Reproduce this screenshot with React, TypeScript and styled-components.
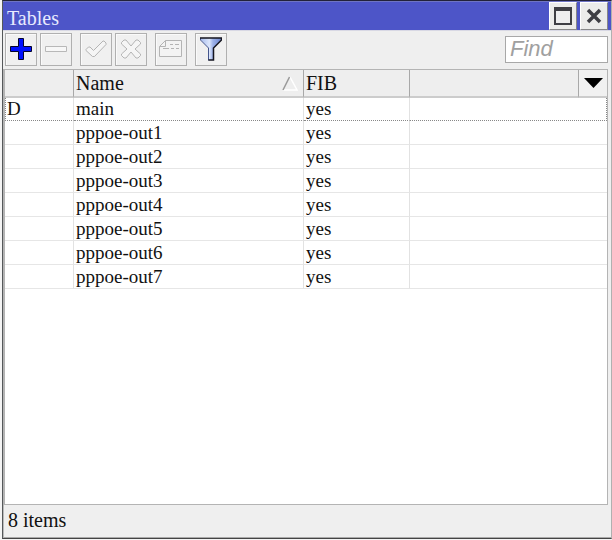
import React, { useState } from "react";
import styled, { createGlobalStyle } from "styled-components";

const GlobalStyle = createGlobalStyle`
  * { box-sizing: border-box; }
  body {
    margin: 0;
    background: #f4f4f4;
    font-family: "Liberation Serif", "Times New Roman", serif;
    font-size: 20px;
    color: #111;
  }
`;

const Window = styled.main`
  display: flex;
  flex-direction: column;
  min-height: calc(100vh - 1px);
  margin: 0 0 1px 2px;
  background: #efefef;
  border-top: 1px solid #22223a;
  border-left: 1px solid #55585a;
  border-right: 1px solid #b0b0b0;
  border-bottom: 1px solid #444;
`;

const TitleBar = styled.header`
  display: flex;
  align-items: stretch;
  justify-content: space-between;
  height: 29px;
  padding: 0 3px 0 4px;
  background: #4d55c8;
  border-top: 1px solid #6e74c4;
`;

const Title = styled.h1`
  margin: 0;
  font-size: 20px;
  line-height: 32px;
  font-weight: normal;
  color: #e8eaff;
`;

const WindowButtons = styled.div`
  display: flex;
  gap: 3px;
`;

const WindowButton = styled.button`
  display: flex;
  align-items: center;
  justify-content: center;
  width: 28px;
  padding: 0;
  background: #ececea;
  border: 1px solid #fff;
  border-right-color: #888;
  border-bottom-color: #888;
`;

const Toolbar = styled.div`
  display: flex;
  align-items: center;
  justify-content: space-between;
  height: 39px;
  padding: 0 3px 2px 2px;
  border-top: 1px solid #d8d8e4;
`;

const ToolGroups = styled.div`
  display: flex;
  gap: 8px;
`;

const ToolGroup = styled.div`
  display: flex;
  gap: 3px;
`;

const ToolButton = styled.button`
  display: flex;
  align-items: center;
  justify-content: center;
  width: 32px;
  height: 33px;
  padding: 0;
  background: #f0f0f0;
  border: 1px solid #b0b0b0;
  box-shadow: inset 1px 1px #fafafa;
`;

const FindBox = styled.input`
  width: 103px;
  height: 27px;
  padding: 0 4px;
  border: 1px solid #a8a8a8;
  border-radius: 0;
  background: #fff;
  font: italic 22px "Liberation Sans", Arial, sans-serif;
  color: #111;
  &::placeholder { color: #a0a0a0; opacity: 1; }
`;

const ListPane = styled.section`
  flex: 1;
  margin: 0 3px 0 0;
  background: #fff;
  border: solid #b4b4b4;
  border-width: 1px 1px 1px 2px;
`;

const Grid = styled.table`
  width: 100%;
  table-layout: fixed;
  border-collapse: separate;
  border-spacing: 0;
`;

const HeadCell = styled.th<{ $open?: boolean }>`
  height: 28px;
  padding: 0 2px;
  text-align: left;
  font-weight: normal;
  line-height: 25px;
  background: #eee;
  border-right: ${(p) => (p.$open ? "0" : "1px solid #a8a8a8")};
  border-bottom: 2px solid #ccc;
`;

const SortLabel = styled.div`
  display: flex;
  align-items: center;
  justify-content: space-between;
  padding-right: 3px;
`;

const MenuButton = styled.button`
  display: flex;
  align-items: center;
  justify-content: center;
  width: 100%;
  height: 26px;
  padding: 0;
  background: #f1f1f1;
  border: 0;
`;

const MenuHead = styled(HeadCell)`
  padding: 0;
`;

const Row = styled.tr<{ $focused: boolean }>`
  & > td {
    height: ${(p) => (p.$focused ? "23px" : "24px")};
    line-height: ${(p) => (p.$focused ? "22px" : "23px")};
    border-bottom: 1px ${(p) => (p.$focused ? "dotted #888" : "solid #e6e6e6")};
  }
  & > td:first-child {
    border-left: ${(p) => (p.$focused ? "1px dotted #888" : "0")};
    padding-left: 1px;
  }
  & > td:last-child {
    border-right: ${(p) => (p.$focused ? "1px dotted #888" : "0")};
  }
`;

const Cell = styled.td`
  padding: 0 2px;
  font-size: 19px;
  border-right: 1px solid #e2e2e2;
`;

const StatusBar = styled.footer`
  height: 33px;
  padding: 0 4px;
  line-height: 30px;
  border-left: 1px solid #bbb;
  border-bottom: 1px solid #aaa;
`;

const rows = [
  { flag: "D", name: "main", fib: "yes" },
  ...[1, 2, 3, 4, 5, 6, 7].map((n) => ({ flag: "", name: `pppoe-out${n}`, fib: "yes" })),
];

const PlusIcon = () => (
  <svg width="22" height="22" viewBox="0 0 22 22" aria-hidden="true">
    <path d="M8.500 .5h5v8h8v5h-8v8h-5v-8h-8v-5h8z" fill="#0010ff" stroke="#05052c" />
  </svg>
);

const MinusIcon = () => (
  <svg width="22" height="22" viewBox="0 0 22 22" aria-hidden="true">
    <path d="M.5 8.500h21v5H.5z" fill="#f7f7f7" stroke="#b8b8b8" />
  </svg>
);

const CheckIcon = () => (
  <svg width="22" height="22" viewBox="0 0 22 22" aria-hidden="true">
    <path d="M1 12.500v-1L3.500 9h1.500l3.500 3.500L18 3h1l2 2v1.500L9.500 18.500h-2z" fill="#f5f5f5" stroke="#b4b4b4" strokeLinejoin="round" />
  </svg>
);

const CrossIcon = () => (
  <svg width="22" height="22" viewBox="0 0 22 22" aria-hidden="true">
    <path d="M4 2h2l5 6 5-6h2l2.500 2.500V6L15 11l5.500 5v1.500L18 20h-2l-5-6-5 6H4l-2.500-2.500V16L7 11 1.500 6V4.500z" fill="#f5f5f5" stroke="#b4b4b4" strokeLinejoin="round" />
  </svg>
);

const CommentIcon = () => (
  <svg width="24" height="18" viewBox="0 0 24 18" aria-hidden="true">
    <path d="M6.500 .5h16v16H.5v-10zM6.500 .5v6h-6" fill="#f3f3f3" stroke="#b4b4b4" />
    <path d="M11 4.500h3M16 4.500h4M4 8.500h6M12 8.500h3M17 8.500h3" stroke="#b4b4b4" />
  </svg>
);

const FilterIcon = () => (
  <svg width="22" height="24" viewBox="0 0 22 24" aria-hidden="true">
    <defs>
      <linearGradient id="funnel">
        <stop offset="0" stopColor="#a9bdee" />
        <stop offset=".42" stopColor="#dce6fb" />
        <stop offset=".6" stopColor="#9db2ea" />
        <stop offset="1" stopColor="#6c85cf" />
      </linearGradient>
    </defs>
    <path d="M1 1h20v2l-7 8v12H8.500V11L1 3z" fill="url(#funnel)" />
    <path d="M.5 1v2l8 8v12.500" fill="none" stroke="#44558c" />
    <path d="M0 1h22M21.500 1v2l-8 8v12H8.500" fill="none" stroke="#15151f" strokeWidth="1.500" />
  </svg>
);

const MaximizeIcon = () => (
  <svg width="18" height="18" viewBox="0 0 18 18" aria-hidden="true" shapeRendering="crispEdges">
    <path d="M1 1h16v16H1z" fill="#eee" stroke="#3f3f44" strokeWidth="2" />
    <path d="M0 2h18" stroke="#3f3f44" strokeWidth="4" />
  </svg>
);

const CloseIcon = () => (
  <svg width="16" height="16" viewBox="0 0 16 16" aria-hidden="true">
    <path d="M2 2l12 12M14 2 2 14" stroke="#3f3f44" strokeWidth="3.500" />
  </svg>
);

const SortIcon = () => (
  <svg width="16" height="15" viewBox="0 0 16 15" aria-hidden="true">
    <path d="M8 1l7 13H1" fill="none" stroke="#fff" strokeWidth="1.500" />
    <path d="M1 14 7.500 1" stroke="#999" strokeWidth="1.500" />
  </svg>
);

const MenuIcon = () => (
  <svg width="19" height="10" viewBox="0 0 19 10" aria-hidden="true">
    <path d="M0 0h19l-9.500 10z" fill="#000" />
  </svg>
);

export default function App() {
  const [query, setQuery] = useState("");
  const shown = rows.filter((row) => row.name.includes(query));

  return (
    <>
      <GlobalStyle />
      <Window>
        <TitleBar>
          <Title>Tables</Title>
          <WindowButtons>
            <WindowButton aria-label="Maximize"><MaximizeIcon /></WindowButton>
            <WindowButton aria-label="Close"><CloseIcon /></WindowButton>
          </WindowButtons>
        </TitleBar>
        <Toolbar>
          <ToolGroups>
            <ToolGroup>
              <ToolButton aria-label="Add"><PlusIcon /></ToolButton>
              <ToolButton aria-label="Remove" disabled><MinusIcon /></ToolButton>
            </ToolGroup>
            <ToolGroup>
              <ToolButton aria-label="Enable" disabled><CheckIcon /></ToolButton>
              <ToolButton aria-label="Disable" disabled><CrossIcon /></ToolButton>
            </ToolGroup>
            <ToolButton aria-label="Comment" disabled><CommentIcon /></ToolButton>
            <ToolButton aria-label="Filter"><FilterIcon /></ToolButton>
          </ToolGroups>
          <FindBox
            aria-label="Find"
            placeholder="Find"
            value={query}
            onChange={(e) => setQuery(e.target.value)}
          />
        </Toolbar>
        <ListPane>
          <Grid>
            <colgroup>
              <col width="69" />
              <col width="230" />
              <col width="106" />
              <col />
              <col width="28" />
            </colgroup>
            <thead>
              <tr>
                <HeadCell aria-label="Flags" />
                <HeadCell aria-sort="ascending">
                  <SortLabel>Name<SortIcon /></SortLabel>
                </HeadCell>
                <HeadCell>FIB</HeadCell>
                <HeadCell />
                <MenuHead $open>
                  <MenuButton aria-label="Columns"><MenuIcon /></MenuButton>
                </MenuHead>
              </tr>
            </thead>
            <tbody>
              {shown.map((row) => (
                <Row key={row.name} $focused={row.name === "main"}>
                  <Cell>{row.flag}</Cell>
                  <Cell>{row.name}</Cell>
                  <Cell>{row.fib}</Cell>
                  <Cell colSpan={2} />
                </Row>
              ))}
            </tbody>
          </Grid>
        </ListPane>
        <StatusBar>{shown.length} items</StatusBar>
      </Window>
    </>
  );
}
